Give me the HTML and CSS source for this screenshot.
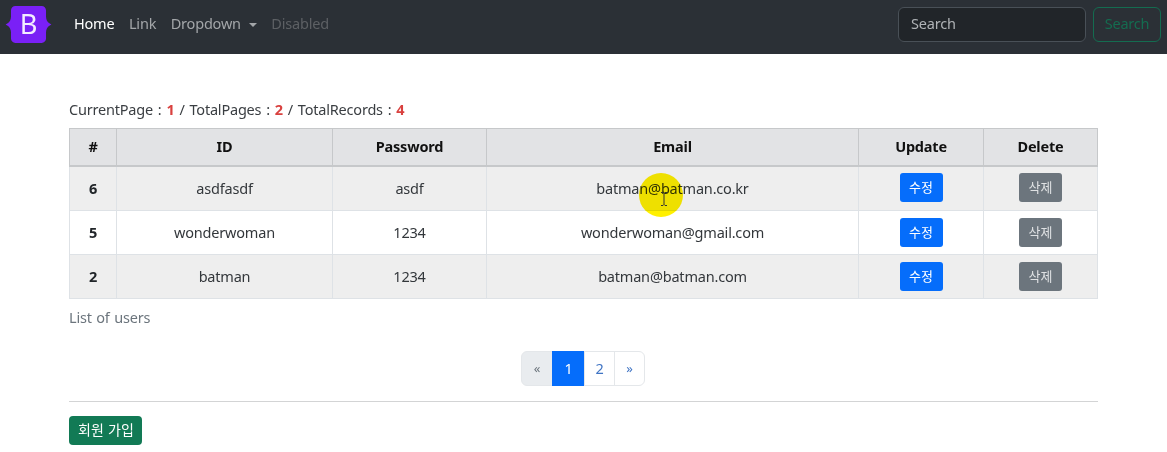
FILE: index.html
```html
<!DOCTYPE html>
<html lang="ko">
<head>
<meta charset="utf-8">
<title>Users</title>
<link rel="stylesheet" href="styles.css">
</head>
<body>
<nav class="navbar">
  <svg class="brand" viewBox="0 0 48 38" width="47" height="37" aria-hidden="true">
    <path fill="#7a20f6" d="M6 4.500C6 2 8 0 10.500 0h27C40 0 42 2 42 4.500v6.500c0 3 1.500 5.500 3 6.500l2.500 1.500-2.500 1.500c-1.500 1-3 3.500-3 6.500v6.500C42 36 40 38 37.500 38h-27C8 38 6 36 6 33.500V27c0-3-1.500-5.500-3-6.500L.5 19 3 17.500c1.500-1 3-3.500 3-6.500z"/>
    <text class="brand-letter" x="24" y="29" text-anchor="middle">B</text>
  </svg>
  <ul class="nav">
    <li class="nav-link active">Home</li>
    <li class="nav-link">Link</li>
    <li class="nav-link">Dropdown<span class="caret"></span></li>
    <li class="nav-link disabled">Disabled</li>
  </ul>
  <form class="search">
    <input class="search-input" type="text" placeholder="Search">
    <button class="search-btn" type="button">Search</button>
  </form>
</nav>
<main class="container">
  <p class="summary">CurrentPage : <b>1</b> / TotalPages : <b>2</b> / TotalRecords : <b>4</b></p>
  <table class="users">
    <colgroup>
      <col class="c1"><col class="c2"><col class="c3"><col class="c4"><col class="c5"><col class="c6">
    </colgroup>
    <thead>
      <tr><th>#</th><th>ID</th><th>Password</th><th>Email</th><th>Update</th><th>Delete</th></tr>
    </thead>
    <tbody>
      <tr class="odd first"><th>6</th><td>asdfasdf</td><td>asdf</td><td>batman@batman.co.kr</td><td><span class="btn blue">수정</span></td><td><span class="btn gray">삭제</span></td></tr>
      <tr><th>5</th><td>wonderwoman</td><td>1234</td><td>wonderwoman@gmail.com</td><td><span class="btn blue">수정</span></td><td><span class="btn gray">삭제</span></td></tr>
      <tr class="odd"><th>2</th><td>batman</td><td>1234</td><td>batman@batman.com</td><td><span class="btn blue">수정</span></td><td><span class="btn gray">삭제</span></td></tr>
    </tbody>
  </table>
  <p class="caption">List of users</p>
  <ul class="pagination">
    <li class="page off">«</li>
    <li class="page on">1</li>
    <li class="page num">2</li>
    <li class="page last">»</li>
  </ul>
  <hr class="rule">
  <span class="btn green">회원 가입</span>
</main>
<div class="highlight"></div>
<svg class="ibeam" viewBox="0 0 8 14" width="8" height="14" aria-hidden="true"><path d="M1 .5h2l1 1 1-1h2M4 1.500v11M1 13.500h2l1-1 1 1h2" fill="none" stroke="#333" stroke-width="1"/></svg>
</body>
</html>
```
FILE: styles.css
```css
* { box-sizing: border-box; }
html, body { margin: 0; padding: 0; }
body {
  width: 1167px;
  height: 452px;
  overflow: hidden;
  background: #fff;
  color: #3a3e42;
  font-family: "Noto Sans", "Noto Sans CJK KR", sans-serif;
  font-size: 14.5px;
  letter-spacing: -0.2px;
  position: relative;
}
.navbar {
  height: 54px;
  background: #2b3036;
  display: flex;
  align-items: center;
  padding: 0 6px 6px 5px;
}
.brand { flex: none; overflow: visible; }
.brand-letter { font: 400 28px "Noto Sans", sans-serif; fill: #f3ecff; letter-spacing: 0; }
.nav {
  list-style: none;
  margin: 0 0 0 22px;
  padding: 0 0 2px;
  display: flex;
  gap: 14.5px;
  flex: 1;
}
.nav-link { color: #a3a6a9; line-height: 20px; }
.nav-link.active { color: #fff; }
.nav-link.disabled { color: #5d6064; }
.caret {
  display: inline-block;
  margin-left: 8px;
  vertical-align: 2px;
  border-top: 4px solid #a3a6a9;
  border-left: 4px solid transparent;
  border-right: 4px solid transparent;
}
.search { display: flex; gap: 7px; }
.search-input {
  width: 188px;
  height: 35px;
  background: #212529;
  border: 1px solid #495057;
  border-radius: 6px;
  padding: 0 12px 2px;
  font: inherit;
  letter-spacing: inherit;
  color: #fff;
}
.search-input::placeholder { color: #b0b3b6; opacity: 1; }
.search-btn {
  width: 68px;
  height: 35px;
  background: transparent;
  border: 1px solid #146c50;
  border-radius: 6px;
  padding: 0 0 2px;
  font: inherit;
  letter-spacing: inherit;
  color: #146c50;
}
.container { padding: 44px 69px 0; }
.summary { margin: 0 0 8px; line-height: 22px; word-spacing: 1.3px; }
.summary b { color: #d9413f; font-weight: 700; }
.users {
  width: 1028px;
  border-collapse: collapse;
  table-layout: fixed;
  text-align: center;
  margin-top: 1px;
}
.c1 { width: 47px; }
.c2 { width: 216px; }
.c3 { width: 154px; }
.c4 { width: 372px; }
.c5 { width: 125px; }
.c6 { width: 114px; }
.users th, .users td {
  border: 1px solid #dee2e6;
  padding: 0 0 1px;
  height: 44px;
  vertical-align: middle;
  color: #212529;
}
.users th { font-weight: 700; }
.users td { color: #33373b; }
.users thead th {
  height: 37px;
  background: #e2e3e5;
  border-color: #c6c8ca;
  border-bottom-width: 2px;
  color: #111;
}
.users .first th, .users .first td { height: 45px; }
.odd th, .odd td { background: #eeeeee; }
.btn {
  display: inline-block;
  height: 29px;
  line-height: 27px;
  border-radius: 3px;
  color: #fff;
  font-size: 13px;
  padding: 0 9px;
  letter-spacing: 0;
  font-family: "Noto Sans CJK KR", sans-serif;
}
.blue { background: #056dfb; width: 43px; }
.gray { background: #6c757d; color: #dfe1e3; width: 43px; }
.green { background: #127a55; width: 73px; white-space: nowrap; padding: 0 9px; font-size: 14px; letter-spacing: 0.1px; border-radius: 4px; }
.caption { margin: 7px 0 0; line-height: 22px; color: #6c757d; word-spacing: 1px; }
.pagination {
  list-style: none;
  display: flex;
  justify-content: center;
  margin: 23px 0 0;
  padding: 0;
}
.page {
  height: 35px;
  width: 31px;
  line-height: 33px;
  text-align: center;
  border: 1px solid #e4e7ea;
  margin-left: -1px;
  color: #3f74c4;
}
.off { background: #e9ecef; color: #6c757d; border-radius: 6px 0 0 6px; font-size: 13px; width: 32px; }
.on { background: #056dfb; border-color: #056dfb; color: #fff; width: 33px; }
.last { border-radius: 0 6px 6px 0; font-size: 13px; }
.rule { border: 0; border-top: 1px solid #d3d4d5; margin: 15px 0 14px; }
.highlight {
  position: absolute;
  left: 639px;
  top: 173px;
  width: 44px;
  height: 44px;
  border-radius: 50%;
  background: #fff000;
  mix-blend-mode: multiply;
}
.ibeam { position: absolute; left: 660px; top: 192px; }
```
